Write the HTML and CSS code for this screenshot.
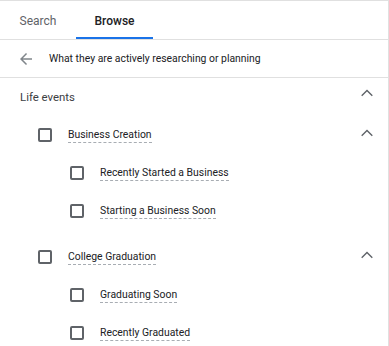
FILE: index.html
```html
<!DOCTYPE html>
<html>
<head>
<meta charset="utf-8">
<link rel="stylesheet" href="styles.css">
</head>
<body>
<div class="panel">
  <div class="tabs">
    <div class="tab tab-search">Search</div>
    <div class="tab tab-browse active">Browse</div>
  </div>
  <div class="back-row">
    <svg class="back-icon" viewBox="0 0 24 24" width="18" height="18"><path d="M20 11H7.83l5.59-5.59L12 4l-8 8 8 8 1.41-1.41L7.83 13H20v-2z"/></svg>
    <span class="crumb">What they are actively researching or planning</span>
  </div>
  <div class="section-head">
    <span class="section-title">Life events</span>
    <svg class="chev" viewBox="0 0 24 24" width="24" height="24"><path d="M6.7 14.7 12 9.4l5.3 5.3" /></svg>
  </div>
  <div class="group">
    <div class="row l1">
      <span class="box"></span><span class="label">Business Creation</span>
      <svg class="chev" viewBox="0 0 24 24" width="24" height="24"><path d="M6.7 14.7 12 9.4l5.3 5.3" /></svg>
    </div>
    <div class="row l2"><span class="box"></span><span class="label">Recently Started a Business</span></div>
    <div class="row l2"><span class="box"></span><span class="label">Starting a Business Soon</span></div>
  </div>
  <div class="group">
    <div class="row l1">
      <span class="box"></span><span class="label">College Graduation</span>
      <svg class="chev" viewBox="0 0 24 24" width="24" height="24"><path d="M6.7 14.7 12 9.4l5.3 5.3" /></svg>
    </div>
    <div class="row l2"><span class="box"></span><span class="label">Graduating Soon</span></div>
    <div class="row l2"><span class="box"></span><span class="label">Recently Graduated</span></div>
  </div>
</div>
</body>
</html>
```
FILE: styles.css
```css
html, body {
  margin: 0;
  padding: 0;
  background: #fff;
}
body {
  font-family: Roboto, "Liberation Sans", Arial, sans-serif;
  color: #3c4043;
}
.panel {
  width: 388px;
  height: 345px;
  border-top: 1px solid #e0e0e0;
  border-right: 1px solid #e0e0e0;
  overflow: hidden;
}
.tabs {
  display: flex;
  height: 38px;
  border-bottom: 1px solid #e0e0e0;
}
.tab {
  display: flex;
  align-items: center;
  justify-content: center;
  box-sizing: border-box;
  font-size: 12px;
  height: 38px;
  padding-top: 1px;
}
.tab-search {
  width: 76px;
  color: #5f6368;
}
.tab-browse {
  width: 77px;
  color: #202124;
  font-weight: 500;
  border-bottom: 2px solid #1a73e8;
  padding-top: 3px;
}
.back-row {
  display: flex;
  align-items: center;
  height: 37px;
  border-bottom: 1px solid #e0e0e0;
  padding-left: 17px;
}
.back-icon {
  fill: #80868b;
}
.crumb {
  margin-left: 14px;
  font-size: 10.4px;
  color: #202124;
}
.section-head {
  display: flex;
  align-items: center;
  height: 38px;
  padding-left: 20px;
  padding-right: 9px;
}
.section-title {
  flex: 1;
  font-size: 11.4px;
  color: #3c4043;
}
.chev {
  fill: none;
  stroke: #5f6368;
  stroke-width: 1.4;
}
.section-head .chev {
  margin-top: -8px;
}
.group {
  margin-bottom: 8px;
}
.row {
  display: flex;
  align-items: center;
  height: 38px;
  padding-right: 9px;
}
.row .chev {
  margin-left: auto;
  margin-top: -4px;
}
.l1 {
  padding-left: 38px;
}
.l2 {
  padding-left: 70px;
}
.box {
  width: 14px;
  height: 14px;
  box-sizing: border-box;
  border: 2px solid #5f6368;
  border-radius: 2px;
  flex: none;
}
.label {
  margin-left: 16px;
  font-size: 10.4px;
  color: #202124;
  border-bottom: 1px dashed #a8adb3;
  line-height: 13px;
  padding-bottom: 1px;
}
```
